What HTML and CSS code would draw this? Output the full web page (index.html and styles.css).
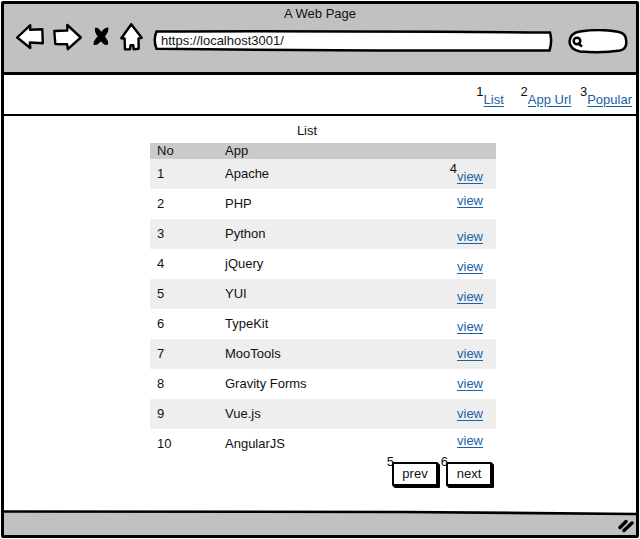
FILE: index.html
```html
<!DOCTYPE html>
<html lang="en">
<head>
<meta charset="utf-8">
<meta name="viewport" content="width=device-width, initial-scale=1">
<title>A Web Page</title>
<link rel="stylesheet" href="styles.css">
</head>
<body>
<div class="window">
  <header class="chrome">
    <h1 class="chrome-title">A Web Page</h1>
    <div class="toolbar">
      <button class="tool" type="button" aria-label="Back">
        <svg class="outline" width="28" height="28" viewBox="0 0 28 28"><path d="M1.2 14.5 14.3 2.2 14 6.8 26.3 6.3 26.8 20.3 13.8 19.5 14.3 25Z"/></svg>
      </button>
      <button class="tool" type="button" aria-label="Forward">
        <svg class="outline" width="29" height="28" viewBox="0 0 29 28"><path d="M1.3 8 14.3 7.5 14.3 2 27.8 14.5 14.8 26.2 14.2 21.3 2.3 21Z"/></svg>
      </button>
      <button class="tool" type="button" aria-label="Stop">
        <svg class="cross" width="20" height="28" viewBox="0 0 20 28"><path d="M5 5.500Q8 6.500 10.500 11Q13 6 16.500 5.500Q17 8.500 12.500 13.500Q17 18.500 16 21Q13 21.500 10 16.500Q6.500 21.500 3.500 21Q3 18.500 8 13.500Q4 8.500 5 5.500Z"/></svg>
      </button>
      <button class="tool" type="button" aria-label="Home">
        <svg class="outline" width="23" height="28" viewBox="0 0 23 28"><path d="M11.300 1.200 21.600 14.800 18.500 15.500 18.700 25.800 13.600 26.200 13.300 22.200 10.600 22.200 10 26.200 5 26.400 4.600 15.500 1.300 15.200Z"/></svg>
      </button>
      <div class="field address">
        <svg class="field-shape" viewBox="0 0 400 24" preserveAspectRatio="none"><path d="M3.500 2.600Q150 1.800 397 3.500Q399.500 12 396.500 21.500Q200 21.800 3.500 19.800Q0 11 3.500 2.600Z"/></svg>
        <input class="field-input" type="text" aria-label="Address" value="https://localhost3001/">
      </div>
      <div class="field search">
        <svg class="field-shape" viewBox="0 0 60 26" preserveAspectRatio="none"><path d="M12 2.500Q32-.5 50 2.800Q58.500 4 58.300 13Q58.500 20 52 21.500Q34 24.500 12 22.500Q1.500 20 1.500 12.500Q2 4 12 2.500Z"/><circle cx="9" cy="12" r="3.300"/><path d="M9.500 14 14 17.500"/></svg>
        <input class="field-input" type="search" aria-label="Search">
      </div>
    </div>
  </header>

  <nav class="site-nav">
    <a class="link noted" href="#list"><span class="note">1</span>List</a>
    <a class="link noted" href="#app-url"><span class="note">2</span>App Url</a>
    <a class="link noted" href="#popular"><span class="note">3</span>Popular</a>
  </nav>

  <main class="content">
    <section class="listing" id="list">
      <h2 class="listing-title">List</h2>
      <table class="apps">
        <thead>
          <tr><th class="col-no">No</th><th>App</th><th class="col-view"></th></tr>
        </thead>
        <tbody>
          <tr><td>1</td><td>Apache</td><td class="low"><a class="link noted" href="#1"><span class="note">4</span>view</a></td></tr>
          <tr><td>2</td><td>PHP</td><td class="high"><a class="link" href="#2">view</a></td></tr>
          <tr><td>3</td><td>Python</td><td class="low"><a class="link" href="#3">view</a></td></tr>
          <tr><td>4</td><td>jQuery</td><td class="low"><a class="link" href="#4">view</a></td></tr>
          <tr><td>5</td><td>YUI</td><td class="low"><a class="link" href="#5">view</a></td></tr>
          <tr><td>6</td><td>TypeKit</td><td class="low"><a class="link" href="#6">view</a></td></tr>
          <tr><td>7</td><td>MooTools</td><td><a class="link" href="#7">view</a></td></tr>
          <tr><td>8</td><td>Gravity Forms</td><td><a class="link" href="#8">view</a></td></tr>
          <tr><td>9</td><td>Vue.js</td><td><a class="link" href="#9">view</a></td></tr>
          <tr><td>10</td><td>AngularJS</td><td class="high"><a class="link" href="#10">view</a></td></tr>
        </tbody>
      </table>
      <div class="pager">
        <button class="pager-button noted" type="button"><span class="note">5</span>prev</button>
        <button class="pager-button noted" type="button"><span class="note">6</span>next</button>
      </div>
    </section>
  </main>

  <footer class="status">
    <svg class="status-edge" viewBox="0 0 632 6" preserveAspectRatio="none"><path class="paper" d="M0 0H632V4L400 2L0 1Z"/><path class="edge" d="M0 1.500 400 2 632 4"/></svg>
    <svg class="grip" width="16" height="14" viewBox="0 0 16 14"><path d="M2 8.500 8 2.500M6 11.500 14 4"/></svg>
  </footer>
</div>
</body>
</html>
```
FILE: styles.css
```css
* {
  box-sizing: border-box;
}

body {
  margin: 0;
  background: #fff;
  color: #111;
  font: 13px/16px "Liberation Sans", Arial, sans-serif;
}

button,
input {
  font: inherit;
  color: inherit;
}

.window {
  display: flex;
  flex-direction: column;
  min-height: calc(100vh - 2px);
  margin: 1px;
  border: 3px solid #000;
  border-radius: 2px;
}

.chrome {
  padding: 2px 8px 17px 12px;
  border-bottom: 3px solid #000;
  background: #c1c1c1;
}

.chrome-title {
  margin: 0;
  padding-right: 4px;
  font-size: 13px;
  font-weight: normal;
  text-align: center;
}

.toolbar {
  display: flex;
  align-items: flex-start;
  gap: 9px;
  padding-top: 1px;
}

.tool {
  display: flex;
  padding: 0;
  border: 0;
  background: none;
}

.outline {
  fill: #fff;
  stroke: #000;
  stroke-width: 2.4;
  stroke-linejoin: round;
}

.cross {
  fill: #000;
  stroke: #000;
  stroke-width: 2;
  stroke-linejoin: round;
}

.field {
  position: relative;
  display: flex;
  margin-top: 6px;
}

.address {
  flex: 1;
  height: 24px;
  margin-left: 1px;
}

.search {
  width: 60px;
  height: 26px;
  margin-left: 6px;
}

.field-shape {
  position: absolute;
  inset: 0;
  width: 100%;
  height: 100%;
  fill: #fff;
  stroke: #000;
  stroke-width: 2.5;
}

.field-input {
  position: relative;
  width: 100%;
  min-width: 0;
  padding: 0 8px;
  border: 0;
  background: none;
  appearance: none;
}

.search .field-input {
  padding-left: 16px;
}

.site-nav {
  display: flex;
  justify-content: flex-end;
  gap: 16px;
  padding: 17px 4px 6px;
  border-bottom: 2px solid #000;
}

.site-nav .link:first-child {
  margin-right: 8px;
}

.link {
  color: #1a62a3;
  text-decoration: underline;
  text-underline-offset: 2px;
}

.noted {
  position: relative;
}

.note {
  position: absolute;
  top: -8px;
  right: 100%;
  color: #111;
}

.content {
  flex: 1;
  padding: 7px 0 16px 6px;
}

.listing {
  max-width: 346px;
  margin: 0 auto;
}

.listing-title {
  margin: 0 0 4px;
  padding-right: 32px;
  font-size: 13px;
  font-weight: normal;
  text-align: center;
}

.apps {
  width: 100%;
  border-collapse: collapse;
  table-layout: fixed;
}

.apps th {
  padding: 0 7px;
  background: #cbcbcb;
  font-weight: normal;
  text-align: left;
}

.apps td {
  height: 30px;
  padding: 7px;
}

.apps tbody tr:nth-child(odd) {
  background: #eee;
}

.apps .col-no {
  width: 68px;
}

.apps .col-view {
  width: 46px;
}

.apps .low {
  padding-top: 10px;
  padding-bottom: 4px;
}

.apps .high {
  padding-top: 4px;
  padding-bottom: 10px;
}

.pager {
  display: flex;
  justify-content: flex-end;
  gap: 8px;
  padding: 3px 4px 0 0;
}

.pager-button {
  min-width: 46px;
  padding: 2px 8px;
  border: 2px solid #000;
  border-radius: 1px;
  background: #fff;
  box-shadow: 1px 1px 0 #000, 2px 2px 0 #000;
}

.pager-button .note {
  top: -10px;
}

.status {
  position: relative;
  display: flex;
  align-items: center;
  justify-content: flex-end;
  height: 25px;
  padding: 6px 2px 0 0;
  background: #c1c1c1;
}

.status-edge {
  position: absolute;
  top: 0;
  left: 0;
  width: 100%;
  height: 6px;
}

.paper {
  fill: #fff;
}

.edge {
  fill: none;
  stroke: #000;
  stroke-width: 2.6;
}

.grip {
  fill: none;
  stroke: #000;
  stroke-width: 3.4;
  stroke-linecap: round;
}
```
